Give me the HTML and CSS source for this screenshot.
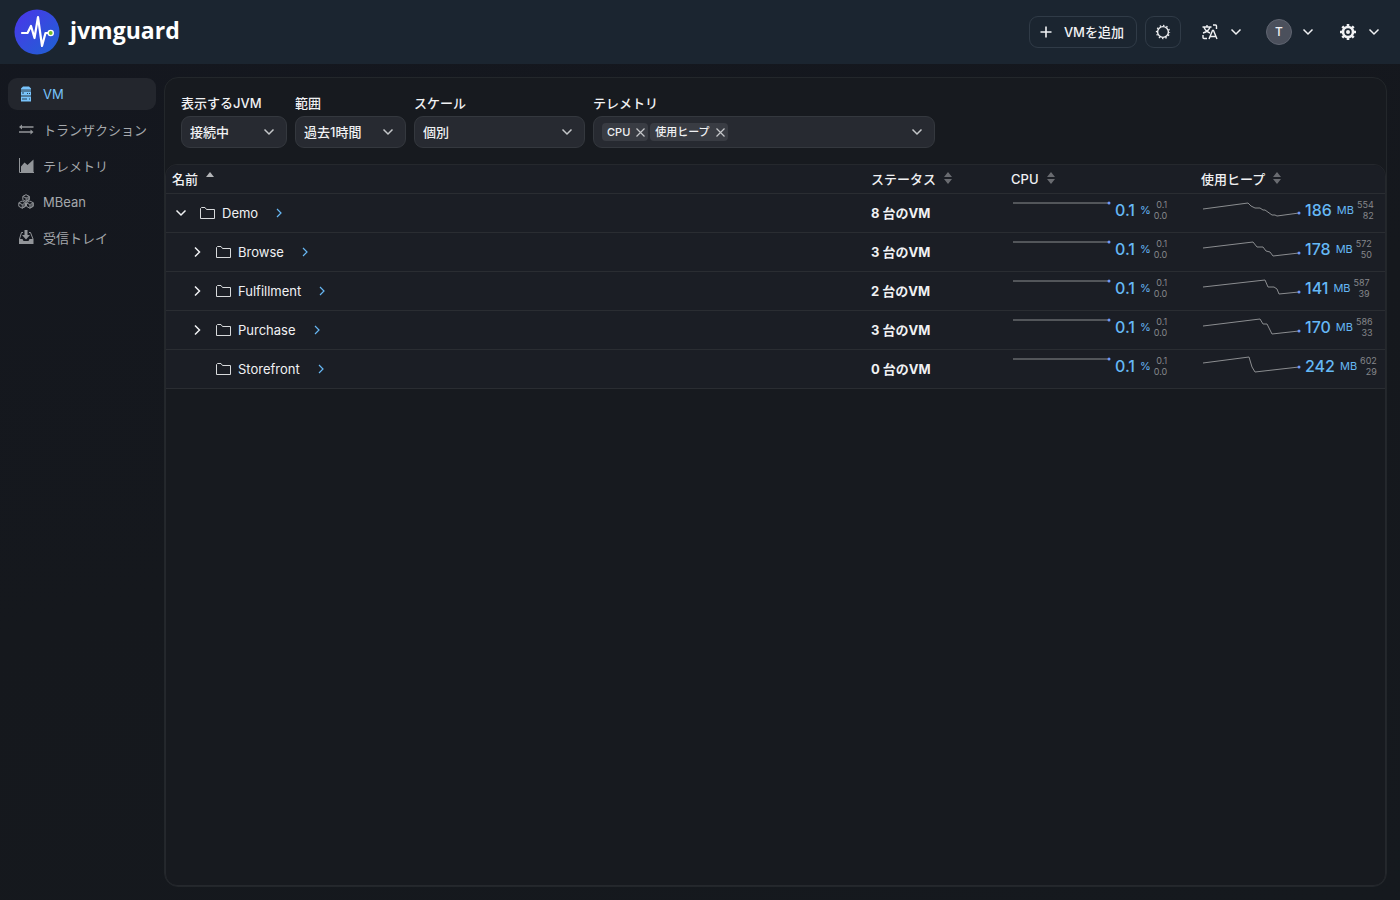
FILE: index.html
```html
<!DOCTYPE html>
<html lang="ja">
<head>
    <meta charset="UTF-8">
    <meta name="viewport" content="width=device-width, initial-scale=1.0">
    <title>jvmguard</title>
    <link rel="stylesheet" href="styles.css">
</head>
<body>
    <!-- shared icons -->
    <svg class="sprite" aria-hidden="true">
        <defs>
            <linearGradient id="logo-fill" x1="0" y1="0" x2="1" y2="1">
                <stop offset="0" stop-color="#4b35ea"/>
                <stop offset="1" stop-color="#1d63d2"/>
            </linearGradient>
        </defs>
        <symbol id="down" viewBox="0 0 12 12"><path d="M1.5 3.5 6 8l4.500-4.500" fill="none" stroke="currentColor" stroke-width="1.500"/></symbol>
        <symbol id="right" viewBox="0 0 12 12"><path d="M4 1.500 8.500 6 4 10.500" fill="none" stroke="currentColor" stroke-width="1.500"/></symbol>
        <symbol id="right-thin" viewBox="0 0 12 12"><path d="M4 2 8 6l-4 4" fill="none" stroke="currentColor" stroke-width="1.200"/></symbol>
        <symbol id="close" viewBox="0 0 11 11"><path d="m1.500 1.500 8 8M9.500 1.500l-8 8" fill="none" stroke="currentColor" stroke-width="1.200"/></symbol>
        <symbol id="folder" viewBox="0 0 16 14"><path d="M1.500 12.500v-10L2.500 1.500H6l1.500 2h8v9z" fill="none" stroke="currentColor"/></symbol>
        <symbol id="sort" viewBox="0 0 8 12"><path d="M0 5 4 0l4 5zM0 7h8l-4 5z" fill="currentColor"/></symbol>
        <symbol id="sort-up" viewBox="0 0 8 12"><path d="M0 5 4 0l4 5z" fill="currentColor"/></symbol>
    </svg>

    <header class="topbar">
        <a class="brand" href="#">
            <svg class="logo" viewBox="0 0 46 46" aria-hidden="true">
                <circle cx="23" cy="23" r="22.500" fill="url(#logo-fill)"/>
                <path d="M8 24h5.500l3.500-7 3.500 12L24 8l4 29 3.500-13H34" fill="none" stroke="#fff" stroke-width="2.200" stroke-linecap="round" stroke-linejoin="round"/>
                <circle cx="36.700" cy="24" r="2.600" fill="#6fbf2c" stroke="#fff" stroke-width="1.300"/>
            </svg>
            <span>jvmguard</span>
        </a>
        <div class="actions">
            <button class="btn" type="button">
                <svg class="icon-12" viewBox="0 0 12 12" aria-hidden="true"><path d="M6 .5v11M.5 6h11" stroke="currentColor" stroke-width="1.600"/></svg>
                VMを追加
            </button>
            <button class="btn btn-square" type="button" aria-label="テーマ">
                <svg class="icon-16" viewBox="0 0 16 16" aria-hidden="true" fill="none" stroke="currentColor">
                    <circle cx="8" cy="8" r="5.400" stroke-width="1.400"/>
                    <circle cx="8" cy="8" r="6.500" stroke-width="1.300" stroke-dasharray="1.400 2.003" stroke-dashoffset=".7"/>
                </svg>
            </button>
            <div class="menus">
                <button class="menu" type="button" aria-label="言語">
                    <svg class="icon-16" viewBox="0 0 16 16" aria-hidden="true" fill="none" stroke="currentColor" stroke-width="1.400">
                        <path d="M.5 3h9M5 1v2M2 3c.8 3 3 4.800 6 6M8 3C7.200 6 4.500 8 1 9M7 15l3.500-8.500h1L15 15M8.300 12.500h5.500M11 1h2.500a1 1 0 0 1 1 1v3M1 11v2.500a1 1 0 0 0 1 1h3"/>
                    </svg>
                    <svg class="icon-12" aria-hidden="true"><use href="#down"/></svg>
                </button>
                <button class="menu menu-user" type="button" aria-label="アカウント">
                    <span class="avatar">T</span>
                    <svg class="icon-12" aria-hidden="true"><use href="#down"/></svg>
                </button>
                <button class="menu" type="button" aria-label="設定">
                    <svg class="icon-16" viewBox="0 0 16 16" aria-hidden="true" fill="none" stroke="currentColor">
                        <circle cx="8" cy="8" r="5" stroke-width="2.600"/>
                        <circle cx="8" cy="8" r="2" fill="currentColor" stroke="none"/>
                        <path d="M8 0v3M8 13v3M0 8h3M13 8h3M2.300 2.300l2 2M11.700 11.700l2 2M13.700 2.300l-2 2M4.300 11.700l-2 2" stroke-width="2.600"/>
                    </svg>
                    <svg class="icon-12" aria-hidden="true"><use href="#down"/></svg>
                </button>
            </div>
        </div>
    </header>

    <div class="layout">
        <nav class="sidebar">
            <a class="nav-item active" href="#">
                <svg class="icon-16" viewBox="0 0 16 16" aria-hidden="true">
                    <path d="M5 .5h6l2 2v1H3v-1zM3 6h10v3H3zM3 11h10v4.500H3z" fill="currentColor"/>
                    <path d="M3 3.500h10V6H3zM3 9h10v2H3z" fill="currentColor" opacity=".55"/>
                    <path d="M4 6.500h2v1H4zM9 7h1v1H9zM11 7h1v1h-1zM4 12.500h5v1H4zM11 12.500h1v1h-1z" fill="#25425c"/>
                </svg>
                VM
            </a>
            <a class="nav-item" href="#">
                <svg class="icon-16" viewBox="0 0 16 16" aria-hidden="true"><path d="M4 2.500 1 5l3 2.500V5.700h11.500V4.300H4zM12.500 7.500v1.800H1v1.400h11.500v1.800l3-2.500z" fill="currentColor"/></svg>
                トランザクション
            </a>
            <a class="nav-item" href="#">
                <svg class="icon-16" viewBox="0 0 16 16" aria-hidden="true"><path d="M1.500 0v14.500H16" fill="none" stroke="currentColor"/><path d="M3 14V8.500l3.500-4L9.500 7l6-5.500V14z" fill="currentColor"/></svg>
                テレメトリ
            </a>
            <a class="nav-item" href="#">
                <svg class="icon-16" viewBox="0 0 16 16" aria-hidden="true" fill="none" stroke="currentColor">
                    <path d="M8 .7 11.200 2.300v3.400L8 7.500 4.800 5.700V2.300zM4.200 7 7.500 8.700v3.600l-3.300 1.900L.8 12.300V8.700zM11.800 7l3.400 1.700v3.600l-3.400 1.900-3.300-1.900V8.700z"/>
                    <path d="M8 4v3.500l3.200-1.800V2.300zM4.200 10.500v3.700l3.300-1.900V8.700zM11.800 10.500v3.700l3.400-1.900V8.700z" fill="currentColor" fill-opacity=".5" stroke-width=".7"/>
                    <path d="M5 2.500 8 4M1 9l3.200 1.500M8.700 9l3.100 1.500"/>
                </svg>
                MBean
            </a>
            <a class="nav-item" href="#">
                <svg class="icon-16" viewBox="0 0 16 16" aria-hidden="true"><path d="M6.500 0h3v5H12L8 9.500 4 5h2.500z" fill="currentColor"/><path d="M5 2.500H3.500L1.500 9M11 2.500h1.500l2.500 6.500" fill="none" stroke="currentColor"/><path d="M1 9h3.500l1 2h5l1-2h4v5H1z" fill="currentColor"/></svg>
                受信トレイ
            </a>
        </nav>

        <main class="panel">
            <form class="filters">
                <div class="field field-jvm">
                    <label for="jvm">表示するJVM</label>
                    <div class="select">
                        <select id="jvm"><option>接続中</option></select>
                        <svg class="icon-12" aria-hidden="true"><use href="#down"/></svg>
                    </div>
                </div>
                <div class="field field-range">
                    <label for="range">範囲</label>
                    <div class="select">
                        <select id="range"><option>過去1時間</option></select>
                        <svg class="icon-12" aria-hidden="true"><use href="#down"/></svg>
                    </div>
                </div>
                <div class="field field-scale">
                    <label for="scale">スケール</label>
                    <div class="select">
                        <select id="scale"><option>個別</option></select>
                        <svg class="icon-12" aria-hidden="true"><use href="#down"/></svg>
                    </div>
                </div>
                <div class="field field-telemetry">
                    <label for="telemetry">テレメトリ</label>
                    <div class="multi">
                        <span class="chip">CPU <button type="button" aria-label="CPUを削除"><svg aria-hidden="true"><use href="#close"/></svg></button></span>
                        <span class="chip">使用ヒープ <button type="button" aria-label="使用ヒープを削除"><svg aria-hidden="true"><use href="#close"/></svg></button></span>
                        <input id="telemetry" type="text" role="combobox" aria-expanded="false">
                        <svg class="icon-12" aria-hidden="true"><use href="#down"/></svg>
                    </div>
                </div>
            </form>

            <div class="grid">
                <table>
                    <colgroup>
                        <col>
                        <col class="col-status">
                        <col class="col-metric">
                        <col class="col-metric">
                    </colgroup>
                    <thead>
                        <tr>
                            <th><button class="sort sorted" type="button">名前 <svg aria-hidden="true"><use href="#sort-up"/></svg></button></th>
                            <th><button class="sort" type="button">ステータス <svg aria-hidden="true"><use href="#sort"/></svg></button></th>
                            <th><button class="sort" type="button">CPU <svg aria-hidden="true"><use href="#sort"/></svg></button></th>
                            <th><button class="sort" type="button">使用ヒープ <svg aria-hidden="true"><use href="#sort"/></svg></button></th>
                        </tr>
                    </thead>
                    <tbody id="vmRows"></tbody>
                </table>
            </div>
        </main>
    </div>

    <script src="script.js"></script>
</body>
</html>
```
FILE: styles.css
```css
* { box-sizing: border-box; }
body {
    margin: 0;
    min-height: 100vh;
    display: flex;
    flex-direction: column;
    font: 13px/18px Inter, "Noto Sans CJK JP", sans-serif;
    color: #f0f1f3;
    background: linear-gradient(165deg, #14171f 0%, #15181d 50%, #15191e 100%);
}
a { color: inherit; text-decoration: none; }
button, select, input { font: inherit; color: inherit; }
button { display: flex; align-items: center; padding: 0; border: 0; background: none; cursor: pointer; }
svg { display: block; flex: none; }
.sprite { position: absolute; width: 0; height: 0; }
.icon-12 { width: 12px; height: 12px; }
.icon-16 { width: 16px; height: 16px; }

/* top bar */
.topbar {
    height: 64px;
    padding: 0 20px 0 14px;
    display: flex;
    align-items: center;
    justify-content: space-between;
    background: #1b2530;
}
.brand { display: flex; align-items: center; gap: 10px; color: #fff; font: bold 23px/28px "Open Sans", sans-serif; }
.brand span { padding-bottom: 4px; }
.logo { width: 46px; height: 46px; }
.actions, .menus { display: flex; align-items: center; }
.actions { gap: 8px; }
.menus { gap: 24px; margin-left: 13px; }
.btn {
    height: 32px;
    padding: 0 12px 0 10px;
    gap: 12px;
    border: 1px solid #303b47;
    border-radius: 9px;
    font-weight: 500;
}
.btn-square { width: 36px; padding: 0; justify-content: center; }
.menu { gap: 12px; }
.menu-user { gap: 10px; padding-right: 2px; }
.avatar {
    width: 26px;
    height: 26px;
    border: 1px solid #606571;
    border-radius: 50%;
    background: #4b505c;
    font-size: 12px;
    line-height: 24px;
    font-weight: 500;
    text-align: center;
}

/* side navigation */
.layout { flex: 1; display: flex; gap: 8px; padding: 13px 13px 13px 8px; }
.sidebar { flex: none; width: 148px; display: flex; flex-direction: column; gap: 4px; padding-top: 1px; }
.nav-item {
    height: 32px;
    padding: 0 8px 0 10px;
    display: flex;
    align-items: center;
    gap: 9px;
    border-radius: 9px;
    color: #a5a8ac;
    white-space: nowrap;
}
.nav-item svg { color: #929599; }
.nav-item.active, .nav-item.active svg { color: #78c3fb; }
.nav-item.active { background: #23262d; }

/* main panel */
.panel {
    flex: 1;
    min-width: 0;
    display: flex;
    flex-direction: column;
    border: 1px solid #23272b;
    border-radius: 14px;
    background: #171a1f;
}
.filters { display: flex; gap: 8px; padding: 16px; }
.field { display: flex; flex-direction: column; gap: 4px; }
.field label { font-weight: 500; }
.field-jvm { width: 106px; }
.field-range { width: 111px; }
.field-scale { width: 171px; }
.field-telemetry { width: 342px; }
.select { display: grid; align-items: center; }
.select select, .select svg { grid-area: 1 / 1; }
.select svg { justify-self: end; margin-right: 12px; pointer-events: none; color: #c4c6c9; }
.select select, .multi {
    width: 100%;
    height: 32px;
    padding: 0 8px;
    border: 1px solid #34383e;
    border-radius: 9px;
    background: #272a31;
    font-weight: 500;
}
.select select { appearance: none; }
.multi { display: flex; align-items: center; gap: 2px; padding-right: 11px; color: #c4c6c9; }
.multi input { flex: 1; min-width: 0; border: 0; outline: 0; background: none; }
.chip {
    height: 18px;
    padding: 0 2px 0 5px;
    display: flex;
    align-items: center;
    gap: 5px;
    border-radius: 4px;
    background: #393c43;
    color: #f0f1f3;
    font-size: 11px;
}
.chip svg { width: 11px; height: 11px; color: #c4c6c9; }

/* vm table */
.grid { flex: 1; border: 1px solid #25282d; border-radius: 12px; overflow: hidden; }
table { width: 100%; table-layout: fixed; border-collapse: collapse; background: #1b1e25; }
.col-status { width: 140px; }
.col-metric { width: 190px; }
th, td { padding: 0 6px; border-bottom: 1px solid #2a2d32; text-align: left; white-space: nowrap; }
th { height: 28px; font-weight: 500; }
td { height: 39px; }
.sort { gap: 8px; }
.sort svg { width: 8px; height: 12px; margin-bottom: 2px; color: #696b70; }
.sorted svg { color: #b4b5b8; }
.status { font-weight: 700; }
.tree { display: flex; align-items: center; }
.tree.child { padding-left: 16px; }
.toggle { width: 18px; height: 20px; justify-content: center; }
.folder { width: 16px; height: 14px; margin: 0 7px 0 9px; color: #d8dadc; }
.tree a { display: flex; align-items: center; gap: 15px; }
.tree a svg { color: #67b7f3; }
.metric-cell { vertical-align: top; }
.metric { height: 32px; display: flex; align-items: center; gap: 5px; color: #65b8f5; font-size: 11px; }
.metric svg { width: 102px; height: 20px; margin-right: -3px; }
.metric polyline { fill: none; stroke: #8b8d90; }
.metric circle { fill: #6b96fb; }
.value { font-size: 16px; font-weight: 500; }
.minmax { margin-left: -2px; color: #85878b; font-size: 9px; line-height: 11px; text-align: right; }
```
FILE: script.js
```js
// sparkline points are in a 102x20 box
const rows = [
    { name: "Demo", open: true, vms: 8, heap: 186, max: 554, min: 82, line: "2,9 47,3 50,6 54,8 59,8 62,10 64,10 71,15 74,15 76,16 98,13" },
    { name: "Browse", child: true, toggle: true, vms: 3, heap: 178, max: 572, min: 50, line: "2,9 52,3 56,8 62,8 65,12 69,13 72,17 98,14" },
    { name: "Fulfillment", child: true, toggle: true, vms: 2, heap: 141, max: 587, min: 39, line: "2,9 64,2 67,9 73,9 76,11 78,16 98,14" },
    { name: "Purchase", child: true, toggle: true, vms: 3, heap: 170, max: 586, min: 33, line: "2,9 59,2 62,7 66,7 71,17 98,14" },
    { name: "Storefront", child: true, vms: 0, heap: 242, max: 602, min: 29, line: "2,7 48,1 51,11 54,16 98,11" }
];

function metric(line, value, unit, max, min) {
    const endY = line.split(",").pop();
    return `
        <div class="metric">
            <svg viewBox="0 0 102 20" aria-hidden="true"><polyline points="${line}"/><circle cx="98" cy="${endY}" r="1.5"/></svg>
            <span class="value">${value}</span>
            <span>${unit}</span>
            <div class="minmax">${max}<br>${min}</div>
        </div>`;
}

function toggle(row) {
    if (!row.open && !row.toggle) return `<span class="toggle"></span>`;
    const icon = row.open ? "down" : "right";
    return `<button class="toggle" type="button" aria-label="${row.name}"><svg class="icon-12" aria-hidden="true"><use href="#${icon}"/></svg></button>`;
}

document.getElementById("vmRows").innerHTML = rows.map(row => `
    <tr>
        <td>
            <div class="tree ${row.child ? "child" : ""}">
                ${toggle(row)}
                <svg class="folder" aria-hidden="true"><use href="#folder"/></svg>
                <a href="#">${row.name} <svg class="icon-12" aria-hidden="true"><use href="#right-thin"/></svg></a>
            </div>
        </td>
        <td class="status">${row.vms} 台のVM</td>
        <td class="metric-cell">${metric("2,3 98,3", "0.1", "%", "0.1", "0.0")}</td>
        <td class="metric-cell">${metric(row.line, row.heap, "MB", row.max, row.min)}</td>
    </tr>`).join("");
```
